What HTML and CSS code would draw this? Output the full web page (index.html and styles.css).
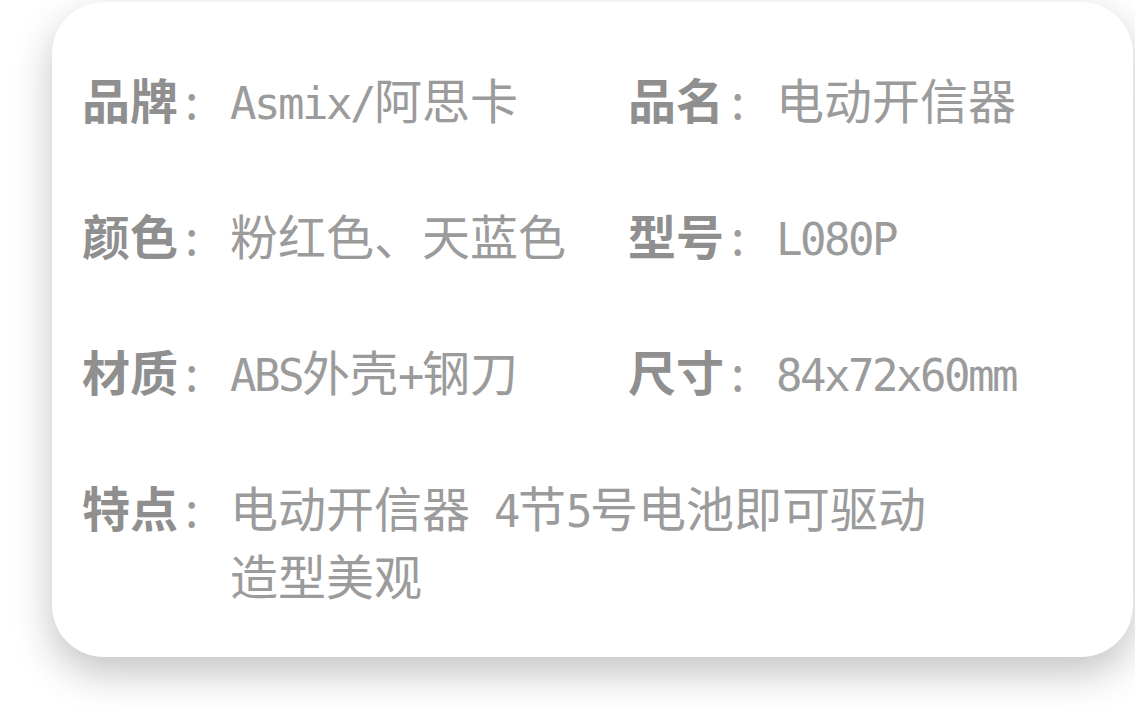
FILE: index.html
```html
<!DOCTYPE html>
<html lang="zh-CN">
<head>
    <meta charset="UTF-8">
    <meta name="viewport" content="width=device-width, initial-scale=1.0">
    <title>电动开信器 参数</title>
    <link rel="stylesheet" href="styles.css">
</head>
<body>
    <div class="card">
        <!-- product specs, two columns -->
        <div class="specs">
            <div class="item">
                <div class="label">品牌<span class="colon">:</span></div>
                <div class="value"><span class="en">Asmix/</span>阿思卡</div>
            </div>
            <div class="item">
                <div class="label">品名<span class="colon">:</span></div>
                <div class="value">电动开信器</div>
            </div>
            <div class="item">
                <div class="label">颜色<span class="colon">:</span></div>
                <div class="value">粉红色、天蓝色</div>
            </div>
            <div class="item">
                <div class="label">型号<span class="colon">:</span></div>
                <div class="value"><span class="en">L080P</span></div>
            </div>
            <div class="item">
                <div class="label">材质<span class="colon">:</span></div>
                <div class="value"><span class="en">ABS</span>外壳<span class="en">+</span>钢刀</div>
            </div>
            <div class="item">
                <div class="label">尺寸<span class="colon">:</span></div>
                <div class="value"><span class="en">84x72x60mm</span></div>
            </div>
            <div class="item wide">
                <div class="label">特点<span class="colon">:</span></div>
                <div class="value long">电动开信器<span class="en"> 4</span>节<span class="en">5</span>号电池即可驱动造型美观</div>
            </div>
        </div>
    </div>
</body>
</html>
```

FILE: styles.css
```css
/* Reset margin for body */
body {
    margin: 0;
    padding-bottom: 80px; /* room for the card shadow */
    background-color: #fff;
    overflow: hidden;
}

.card {
    width: 1081px;
    height: 655px;
    margin: 2px 0 0 52px;
    padding: 62px 30px 0 30px;
    box-sizing: border-box;
    background-color: #fff;
    border-radius: 52px;
    box-shadow: 0 16px 40px rgba(0, 0, 0, 0.24); /* soft grey halo */
}

.specs {
    display: grid;
    grid-template-columns: 546px auto;
    grid-auto-rows: min-content;
    row-gap: 68px;
    font-family: "Noto Sans CJK SC", sans-serif;
    font-size: 48px;
    line-height: 68px;
}

.item {
    display: flex;
}

.item.wide {
    grid-column: 1 / 3;
}

.label {
    width: 148px;
    flex-shrink: 0;
    font-weight: bold;
    color: #8f8f8f;
}

.colon {
    font-weight: normal;
    color: #9b9b9b;
    padding-left: 7px;
}

.value {
    color: #9b9b9b;
}

.value.long {
    width: 720px;
}

/* half-width latin, like the original phone font */
.en {
    font-family: "DejaVu Sans Mono", monospace;
    font-size: 44px;
    line-height: 0;
    letter-spacing: -2.5px;
}
```
